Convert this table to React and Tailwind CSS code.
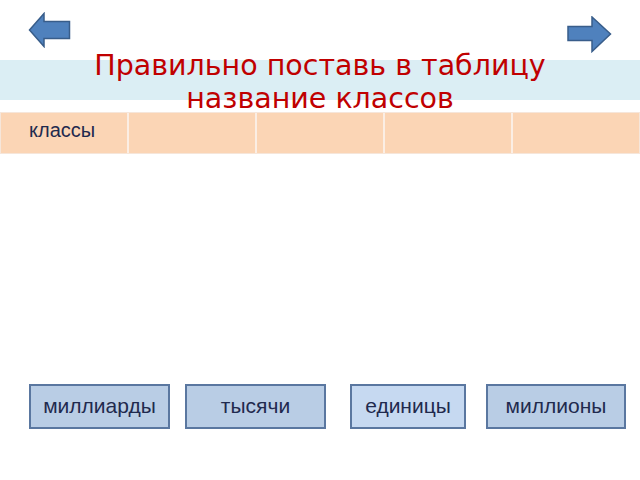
const CELLS = ['классы', '', '', '', ''];

const CARDS = [
  { label: 'миллиарды', w: 'w-[141px]', ml: 'ml-[29px]', bg: 'bg-[#b9cde5]' },
  { label: 'тысячи', w: 'w-[141px]', ml: 'ml-[15px]', bg: 'bg-[#b9cde5]' },
  { label: 'единицы', w: 'w-[116px]', ml: 'ml-[24px]', bg: 'bg-[#c6d9f1]' },
  { label: 'миллионы', w: 'w-[140px]', ml: 'ml-[20px]', bg: 'bg-[#b9cde5]' },
];

function ArrowLeft() {
  return (
    <svg width="44" height="36" viewBox="0 0 44 36">
      <path
        d="M1.5 18 L16 1.5 L16 9.5 L41.5 9.5 L41.5 26.5 L16 26.5 L16 34.5 Z"
        fill="#4f81bd"
        stroke="#385d8a"
        strokeWidth="1.5"
        strokeLinejoin="miter"
      />
    </svg>
  );
}

function ArrowRight() {
  return (
    <svg width="45" height="37" viewBox="0 0 45 37">
      <path
        d="M43.5 18 L25 1 L25 10.5 L1 10.5 L1 24.5 L25 24.5 L25 35.5 Z"
        fill="#4f81bd"
        stroke="#385d8a"
        strokeWidth="1.5"
      />
    </svg>
  );
}

export default function App() {
  return (
    <div className="w-[640px] h-[480px] bg-white overflow-hidden font-['Liberation_Sans',Arial,sans-serif]">
      <div className="h-[60px] flex justify-between items-start">
        <div className="ml-[28px] mt-[12px]">
          <ArrowLeft />
        </div>
        <div className="mr-[28px] mt-[16px]">
          <ArrowRight />
        </div>
      </div>

      <div className="relative h-[40px] bg-[#dbeef4]">
        <h1 className="absolute left-0 right-0 top-[-11px] text-center text-[28.5px] leading-[33px] text-[#c00000] font-normal font-['DejaVu_Sans',sans-serif]">
          Правильно поставь в таблицу
          <br />
          название классов
        </h1>
      </div>

      <div className="mt-[12px] flex h-[42px] border border-[#f6e6da]">
        {CELLS.map((c, i) => (
          <div
            key={i}
            className="flex-1 bg-[#fbd5b5] border-r-2 border-[#fbeee4] last:border-r-0 pl-[28px] pt-[5px] text-[20px] leading-[24px] text-[#1f2a4e]"
          >
            {c}
          </div>
        ))}
      </div>

      <div className="mt-[230px] flex">
        {CARDS.map((c) => (
          <div
            key={c.label}
            className={`${c.w} ${c.ml} ${c.bg} h-[45px] border-2 border-[#5a77a0] flex items-center justify-center pb-[2px] text-[21px] text-[#1f2a4e]`}
          >
            {c.label}
          </div>
        ))}
      </div>
    </div>
  );
}
